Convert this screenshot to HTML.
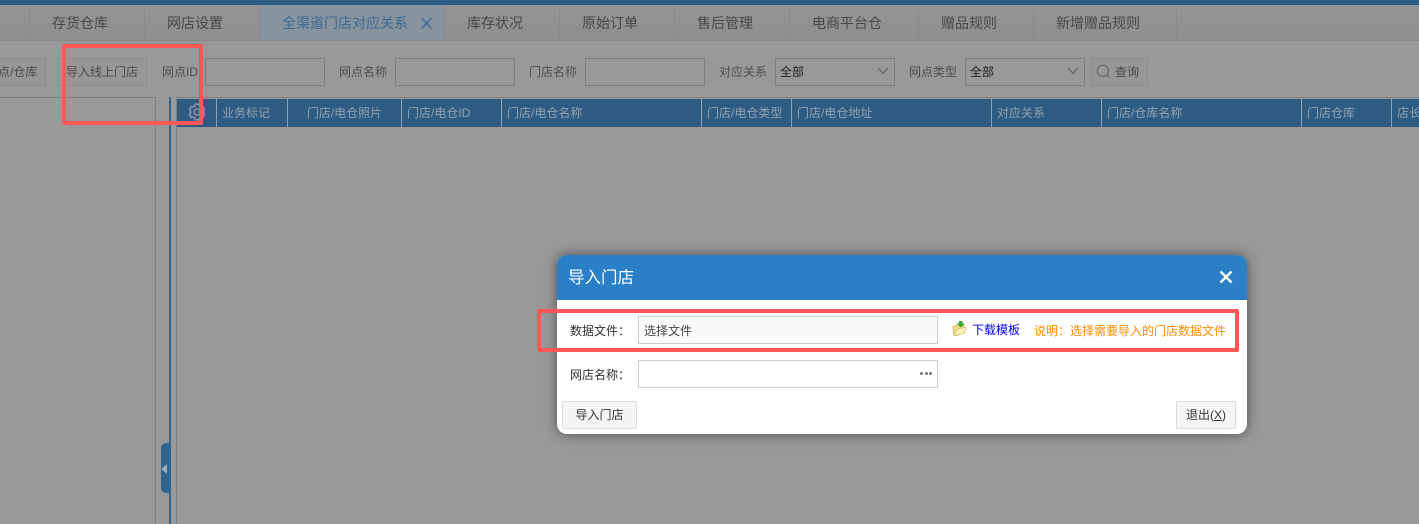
<!DOCTYPE html>
<html lang="zh-CN">
<head>
<meta charset="utf-8">
<style>
html,body{margin:0;padding:0}
body{position:relative;width:1419px;height:524px;overflow:hidden;background:#999;font-family:"Liberation Sans","Noto Sans CJK SC",sans-serif;font-size:12px;color:#505050}
div,span{position:absolute;box-sizing:border-box;white-space:nowrap}
.tab{top:5px;height:35px;line-height:37px;text-align:left;padding-left:22px;font-size:14px;color:#474747;border-right:1px solid #8a8a8a}
.lb{top:58px;line-height:29px;color:#4e4e4e;font-size:12px}
.ip{top:58px;height:28px;border:1px solid #7c7c7c}
.btn{top:58px;height:28px;border:1px solid #8c8c8c;border-radius:2px;line-height:26px;color:#4a4a4a;background:#979797}
.th{top:99px;height:28px;line-height:28px;color:#93a3b2;border-right:1px solid #8fa3b5;padding-left:5px;font-size:12px}
.sv{color:#1e1e1e;line-height:26px;padding-left:4px;font-size:12px}
.red{border:4px solid #ff5757;border-radius:2px}
.dl{color:#303030;font-size:12px;line-height:17px}
.mb{border:1px solid #dcdcdc;background:#f5f5f5;border-radius:2px;color:#333;text-align:center;font-size:12px}
</style>
</head>
<body>
<div style="left:0;top:0;width:1419px;height:5px;background:#2d5b83"></div>
<div style="left:0;top:5px;width:1419px;height:36px;background:linear-gradient(#949494,#8f8f8f);border-bottom:1px solid #888"></div>

<div class="tab" style="left:0;width:30px;padding:0"></div>
<div class="tab" style="left:30px;width:115px">存货仓库</div>
<div class="tab" style="left:145px;width:115px">网店设置</div>
<div class="tab" style="left:260px;width:185px;background:#87939e;color:#3c6a94">全渠道门店对应关系</div>
<svg style="position:absolute;left:420px;top:17px" width="13" height="13" viewBox="0 0 13 13"><path d="M1.5 1L11.5 11.5M11.5 1L1.5 11.5" stroke="#3f6a9f" stroke-width="1.5" fill="none"/></svg>
<div class="tab" style="left:445px;width:115px">库存状况</div>
<div class="tab" style="left:560px;width:115px">原始订单</div>
<div class="tab" style="left:675px;width:115px">售后管理</div>
<div class="tab" style="left:790px;width:129px">电商平台仓</div>
<div class="tab" style="left:919px;width:115px">赠品规则</div>
<div class="tab" style="left:1034px;width:143px">新增赠品规则</div>

<div class="btn" style="left:-10px;width:56px;padding-left:7px">点/仓库</div>
<div class="btn" style="left:57px;width:90px;text-align:center">导入线上门店</div>

<div class="lb" style="left:162px">网点ID</div>
<div class="ip" style="left:205px;width:120px"></div>
<div class="lb" style="left:339px">网点名称</div>
<div class="ip" style="left:395px;width:120px"></div>
<div class="lb" style="left:529px">门店名称</div>
<div class="ip" style="left:585px;width:120px"></div>
<div class="lb" style="left:719px">对应关系</div>
<div class="ip sv" style="left:775px;width:120px">全部</div>
<svg style="position:absolute;left:877px;top:67px" width="12" height="8" viewBox="0 0 12 8"><path d="M1 1L6 6.5L11 1" stroke="#5c5c5c" stroke-width="1" fill="none"/></svg>
<div class="lb" style="left:909px">网点类型</div>
<div class="ip sv" style="left:965px;width:120px">全部</div>
<svg style="position:absolute;left:1067px;top:67px" width="12" height="8" viewBox="0 0 12 8"><path d="M1 1L6 6.5L11 1" stroke="#5c5c5c" stroke-width="1" fill="none"/></svg>
<div class="btn" style="left:1091px;width:57px;padding-left:23px">查询</div>
<svg style="position:absolute;left:1096px;top:64px" width="15" height="15" viewBox="0 0 15 15"><circle cx="6.8" cy="6.8" r="5.6" stroke="#666" stroke-width="1.1" fill="none"/><path d="M10.8 10.8L13.5 13.5" stroke="#666" stroke-width="1.2"/></svg>

<!-- main area -->
<div style="left:0;top:97px;width:156px;height:427px;border-top:1px solid #808080;border-right:1px solid #808080"></div>
<div style="left:169px;top:97px;width:2px;height:427px;background:#2f6593"></div>
<div style="left:176px;top:97px;width:1243px;height:427px;border-top:1px solid #808080;border-left:1px solid #808080"></div>
<div style="left:177px;top:99px;width:1242px;height:28px;background:#2d5b81"></div>
<div style="left:161px;top:443px;width:9px;height:50px;background:#2f6593;border-radius:5px 0 0 5px"></div>
<svg style="position:absolute;left:161px;top:464px" width="7" height="10" viewBox="0 0 7 10"><path d="M6 0L0.5 5L6 10Z" fill="#a3aeb8"/></svg>

<div class="th" style="left:177px;width:40px"></div>
<svg style="position:absolute;left:188px;top:103px" width="18" height="18" viewBox="0 0 18 18"><path d="M6.38 3.38L7.2 1.21H10.8L11.62 3.38L12.56 3.92L14.85 3.54L16.65 6.66L15.18 8.46V9.54L16.65 11.34L14.85 14.46L12.56 14.08L11.62 14.62L10.8 16.79H7.2L6.38 14.62L5.44 14.08L3.15 14.46L1.35 11.34L2.82 9.54V8.46L1.35 6.66L3.15 3.54L5.44 3.92Z" fill="none" stroke="#8496a7" stroke-width="1.6" stroke-linejoin="round"/><circle cx="9" cy="9" r="3" fill="none" stroke="#8496a7" stroke-width="1.6"/></svg>
<div class="th" style="left:217px;width:71px">业务标记</div>
<div class="th" style="left:288px;width:114px;text-align:center;padding:0">门店/电仓照片</div>
<div class="th" style="left:402px;width:100px">门店/电仓ID</div>
<div class="th" style="left:502px;width:200px">门店/电仓名称</div>
<div class="th" style="left:702px;width:90px">门店/电仓类型</div>
<div class="th" style="left:792px;width:200px">门店/电仓地址</div>
<div class="th" style="left:992px;width:110px">对应关系</div>
<div class="th" style="left:1102px;width:200px">门店/仓库名称</div>
<div class="th" style="left:1302px;width:90px">门店仓库</div>
<div class="th" style="left:1392px;width:40px;border:0">店长</div>

<div class="red" style="left:62px;top:44px;width:141px;height:81px"></div>

<!-- dialog -->
<div style="left:557px;top:255px;width:690px;height:179px;background:#fff;border-radius:10px;box-shadow:0 0 12px rgba(0,0,0,.5)"></div>
<div style="left:557px;top:255px;width:690px;height:45px;background:#2a7fc6;border-radius:10px 10px 0 0;color:#fff;font-size:16.5px;line-height:47px;padding-left:11px">导入门店</div>
<svg style="position:absolute;left:1219px;top:270px" width="14" height="14" viewBox="0 0 14 14"><path d="M1.5 1.5L12.5 12.5M12.5 1.5L1.5 12.5" stroke="#fff" stroke-width="2.4" fill="none"/></svg>

<div class="dl" style="left:570px;top:323px">数据文件：</div>
<div style="left:638px;top:316px;width:300px;height:28px;background:#fafafa;border:1px solid #ccc;color:#444;line-height:28px;padding-left:5px;font-size:12px">选择文件</div>
<svg style="position:absolute;left:951px;top:320px" width="17" height="17" viewBox="0 0 17 17"><path d="M2 6.5L6 5L7.5 6.5L13 5.5L13.5 13L4 16L2.5 13Z" fill="#f3dc86" stroke="#c9a94e" stroke-width=".7"/><path d="M3 15.5L6.5 9L15.5 7.5L12.5 13.5Z" fill="#fdf3bd" stroke="#d3b35c" stroke-width=".6"/><path d="M8 1H11.5V3.5H14L9.8 7.5L5.5 3.5H8Z" fill="#3fa52e"/></svg>
<div style="left:972px;top:322px;color:#0000e6;font-size:12px;line-height:17px">下载模板</div>
<div style="left:1034px;top:323px;color:#ff8a00;font-size:12px;line-height:17px">说明：选择需要导入的门店数据文件</div>

<div class="dl" style="left:570px;top:367px">网店名称：</div>
<div style="left:638px;top:360px;width:300px;height:28px;background:#fff;border:1px solid #ccc"></div>
<div style="left:920px;top:372px;width:3px;height:3px;border-radius:50%;background:#777"></div>
<div style="left:924.5px;top:372px;width:3px;height:3px;border-radius:50%;background:#777"></div>
<div style="left:929px;top:372px;width:3px;height:3px;border-radius:50%;background:#777"></div>

<div class="mb" style="left:562px;top:401px;width:75px;height:28px;line-height:26px">导入门店</div>
<div class="mb" style="left:1176px;top:401px;width:60px;height:28px;line-height:26px">退出(<u>X</u>)</div>

<div class="red" style="left:537px;top:309px;width:702px;height:43px"></div>
</body>
</html>
